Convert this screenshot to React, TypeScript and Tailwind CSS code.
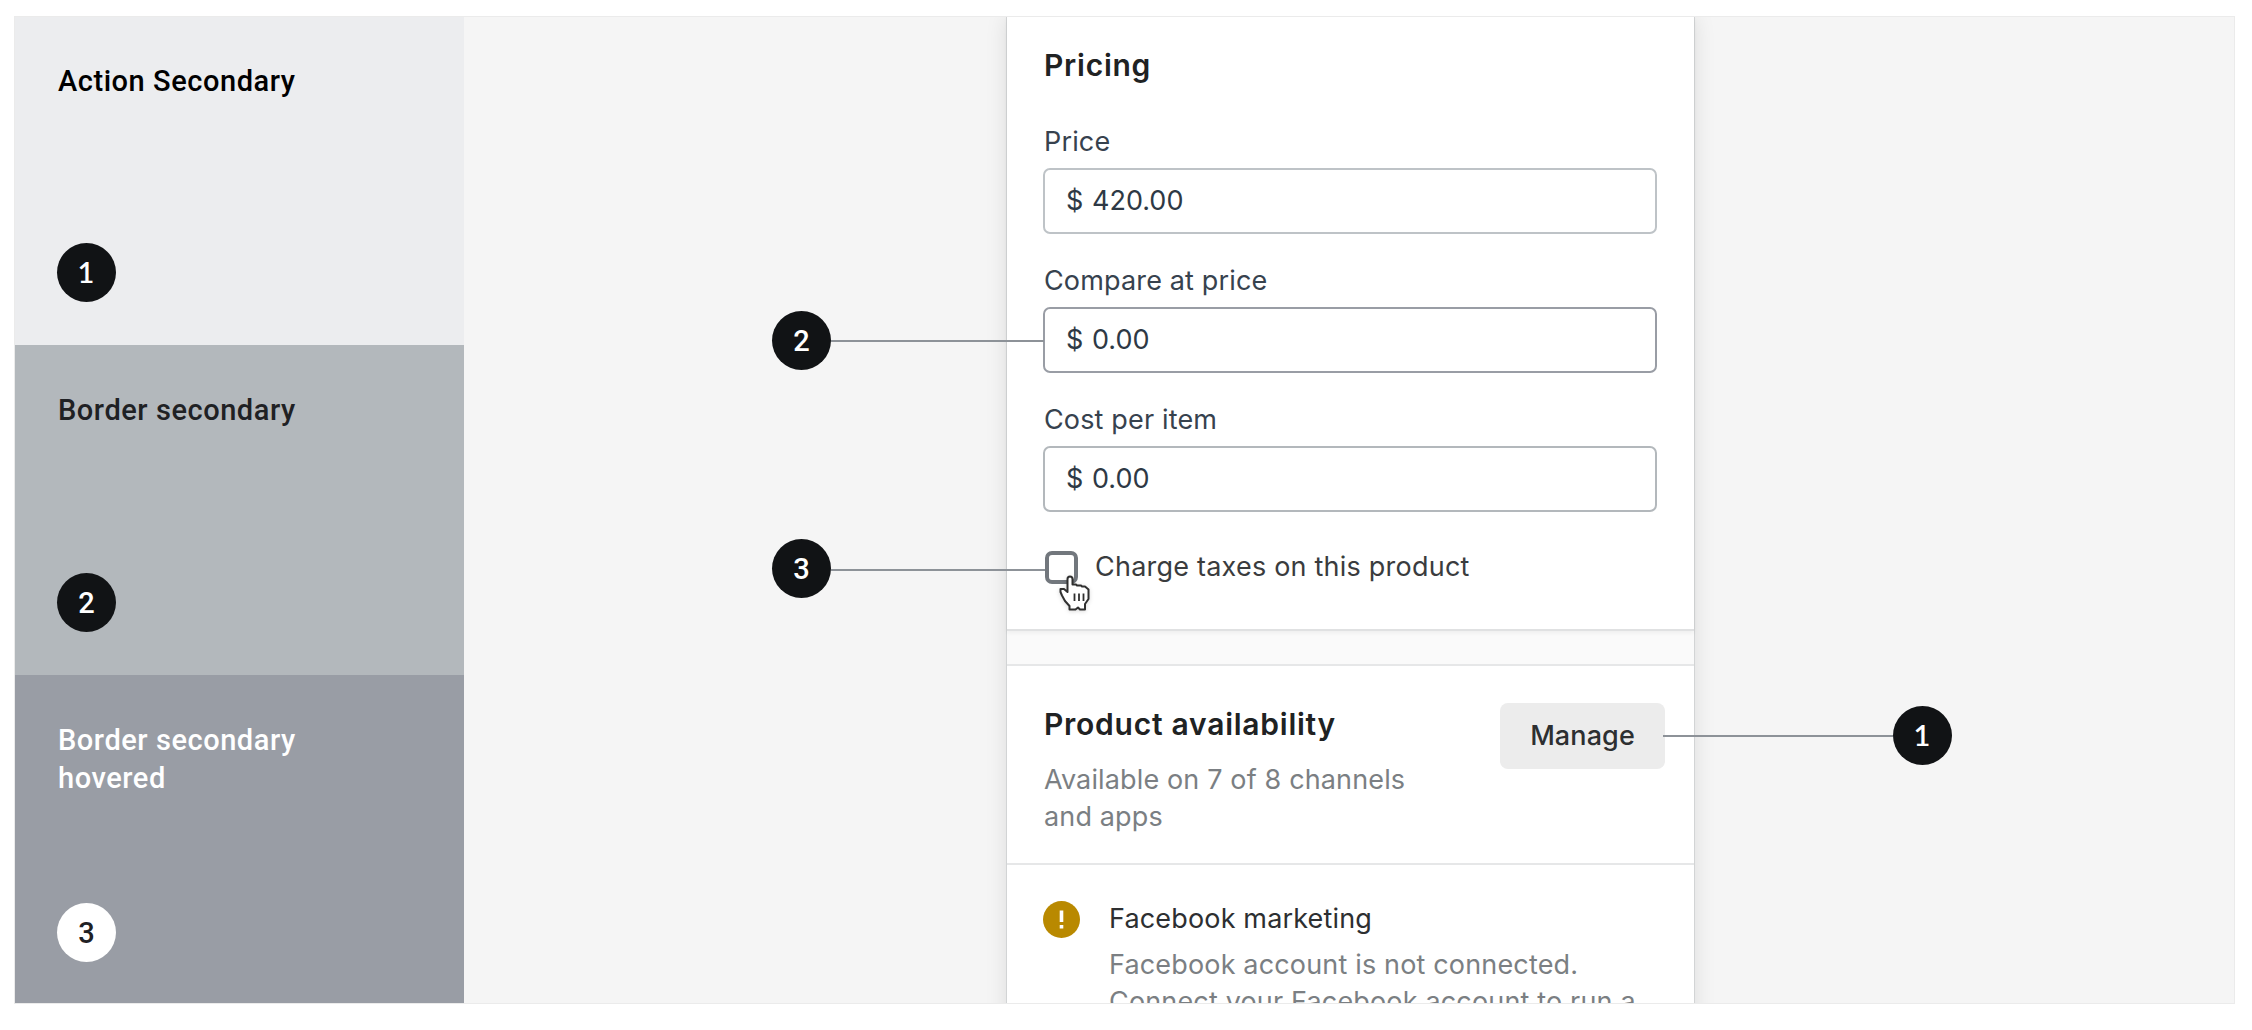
import type { ReactNode } from "react";

function Badge({ n, light }: { n: number; light?: boolean }) {
  return (
    <span
      className={`flex size-[59px] shrink-0 items-center justify-center rounded-full pt-px font-['Roboto',sans-serif] text-[29px] leading-none font-medium ${
        light ? "bg-white text-[#1f2124]" : "bg-[#111315] text-white"
      }`}
    >
      {n === 1 ? <span className="-mt-[3px] -ml-px font-['Lato',sans-serif] text-[29px] font-semibold">1</span> : n}
    </span>
  );
}

function Swatch({ className, n, light, children }: { className: string; n: number; light?: boolean; children: ReactNode }) {
  return (
    <div className={`flex shrink-0 flex-col justify-between pb-[43px] pl-[42px] ${className}`}>
      <div className="pl-px font-['Roboto',sans-serif] text-[29px] leading-[38px] font-medium tracking-[0.550px] whitespace-nowrap">
        {children}
      </div>
      <Badge n={n} light={light} />
    </div>
  );
}

function Field({ label, value, border }: { label: string; value: string; border: string }) {
  return (
    <div className="h-[139px]">
      <div className="h-[43px] pl-px text-[27px] leading-[34px] tracking-[0.15px] whitespace-nowrap text-[#37424e]">{label}</div>
      <div
        className={`flex h-[66px] w-[614px] items-center rounded-[7px] border-2 pl-[21px] text-[27px] whitespace-nowrap text-[#2e3945] ${border}`}
      >
        <span className="w-[26px]">$</span>
        <span>{value}</span>
      </div>
    </div>
  );
}

function Pointer() {
  return (
    <svg className="absolute top-[24px] left-[16px] drop-shadow-sm" width="32" height="37" viewBox="0 0 32 37">
      <path
        d="M8.500 17V4Q8.500 1.500 11 1.500T13.500 4V9.500H17L18 10.500H22L23 11.500H26L29.500 14.500V24L26 29V34.500H21L19 32.500L16.500 34.500H10.500V31L6 26L3 20.500L1.500 17V14H5L8.500 17Z"
        fill="white"
        stroke="#303030"
        strokeWidth="2"
        strokeLinejoin="round"
      />
      <path d="M15.500 18.500V26M20 18.500V26M24.500 18.500V26" stroke="#303030" strokeWidth="1.800" />
    </svg>
  );
}

export default function App() {
  return (
    <div className="h-[1030px] w-[2252px] bg-white pt-4 pl-[14px] font-['Inter',sans-serif]">
      <div className="relative flex h-[988px] w-[2221px] overflow-hidden border border-[#ebebeb] bg-[#f5f5f5]">
        <aside className="flex w-[449px] shrink-0 flex-col">
          <Swatch n={1} className="h-[328px] bg-[#ecedef] pt-[45px] text-black">
            Action Secondary
          </Swatch>
          <Swatch n={2} className="h-[330px] bg-[#b3b8bc] pt-[46px] text-[#1f2124]">
            Border secondary
          </Swatch>
          <Swatch n={3} light className="h-[330px] bg-[#999da5] pt-[46px] text-white">
            Border secondary
            <br />
            hovered
          </Swatch>
        </aside>

        <main className="ml-[542px] h-[1100px] w-[689px] shrink-0 border-x border-[#d2d4d5] bg-[#fafafa] shadow-[0_0_20px_rgba(0,0,0,0.1)]">
          <section className="h-[614px] border-b-2 border-[#e0e1e2] bg-white px-[36px] pt-[30px] shadow-[0_2px_4px_rgba(0,0,0,0.05)]">
            <h2 className="h-[78px] pl-px text-[30px] leading-[36px] font-semibold tracking-[0.750px] text-[#202223]">Pricing</h2>
            <Field label="Price" value="420.00" border="border-[#bec3c7]" />
            <Field label="Compare at price" value="0.00" border="border-[#999da5]" />
            <Field label="Cost per item" value="0.00" border="border-[#b3b8bc]" />
            <div className="relative mt-[9px] flex h-[33px] items-center gap-[17px] pl-[2px]">
              <span className="size-[33px] shrink-0 rounded-[7px] border-[4px] border-[#72777d]" />
              <span className="text-[27px] tracking-[0.220px] whitespace-nowrap text-[#3a3c3e]">Charge taxes on this product</span>
              <Pointer />
            </div>
          </section>
          <section className="mt-[33px] flex h-[201px] justify-between border-y-2 border-[#e6e7e8] bg-white pt-[37px] pr-[29px] pl-[37px]">
            <div>
              <h2 className="h-[58px] text-[30px] leading-[43px] font-semibold tracking-[0.750px] whitespace-nowrap text-[#202223]">
                Product availability
              </h2>
              <p className="text-[27px] leading-[37px] tracking-[0.140px] whitespace-nowrap text-[#7b7f83]">
                Available on 7 of 8 channels
                <br />
                and apps
              </p>
            </div>
            <button className="h-[66px] w-[165px] rounded-[8px] bg-[#ececec] text-[27px] font-medium tracking-[0.1px] text-[#2d2f31]">
              Manage
            </button>
          </section>
          <section className="flex gap-[29px] bg-white pt-[35px] pb-20 pl-[36px]">
            <svg className="mt-px shrink-0" width="37" height="37" viewBox="0 0 37 37">
              <circle cx="18.500" cy="18.500" r="18.500" fill="#b98900" />
              <path d="M16.700 9.500h3.600v11.500h-3.600zM16.700 24h3.600v3.600h-3.600z" fill="white" />
            </svg>
            <div className="text-[27px] leading-[37px] tracking-[0.160px] whitespace-nowrap text-[#7b7f83]">
              <div className="mb-[9px] text-[#2d2f31]">Facebook marketing</div>
              Facebook account is not connected.
              <br />
              Connect your Facebook account to run a
            </div>
          </section>
        </main>

        {/* Numbered callouts laid over the card */}
        <div className="absolute top-[294px] left-[757px] flex w-[272px] items-center">
          <Badge n={2} />
          <span className="mt-px h-[2px] flex-1 bg-[#8d9298]" />
        </div>
        <div className="absolute top-[522px] left-[757px] flex w-[273px] items-center">
          <Badge n={3} />
          <span className="mt-[2px] h-[2px] flex-1 bg-[#8d9298]" />
        </div>
        <div className="absolute top-[689px] left-[1648px] flex w-[289px] items-center">
          <span className="mt-px h-[2px] flex-1 bg-[#8d9298]" />
          <Badge n={1} />
        </div>
      </div>
    </div>
  );
}
